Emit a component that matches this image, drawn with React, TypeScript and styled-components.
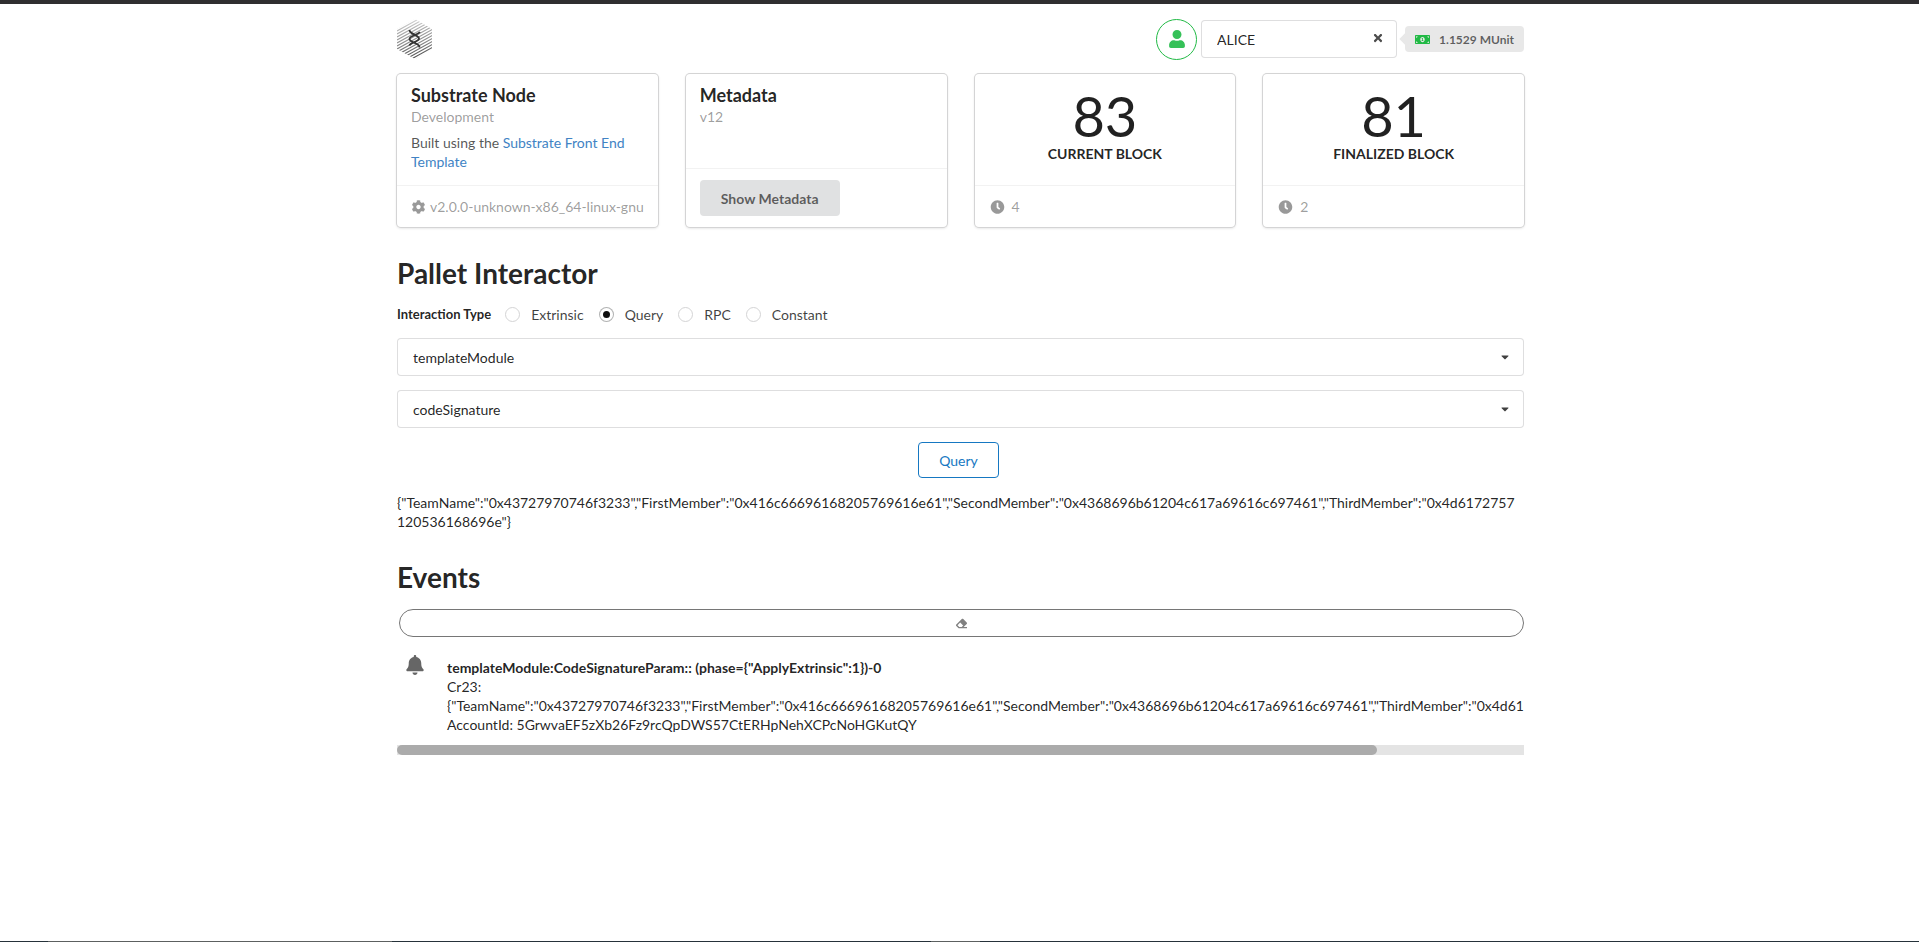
import React, { useRef, useState } from 'react';
import styled, { createGlobalStyle } from 'styled-components';
import { FaBell, FaCaretDown, FaClock, FaCog, FaEraser, FaMoneyBillAlt, FaTimes, FaUser } from 'react-icons/fa';

const GlobalStyle = createGlobalStyle`
  *, *::before, *::after { box-sizing: border-box; }
  body { margin: 0; background: #fff; }
  body, button, select, input {
    font-family: Lato, "Liberation Sans", sans-serif;
    font-size: 14px;
    line-height: 19px;
    color: rgba(0, 0, 0, 0.87);
  }
  h1, h2, p { margin: 0; }
`;

const Page = styled.div`
  min-height: 100vh;
  display: flex;
  flex-direction: column;
  border-top: 4px solid #2f2e30;
`;

const Container = styled.div`
  width: 100%;
  max-width: 1129px;
  margin: 0 auto;
  padding-left: 2px;
  flex: 1;
`;

const Header = styled.header`
  display: flex;
  align-items: center;
  justify-content: space-between;
  height: 70px;
`;

const LogoMark = styled.svg`
  display: block;
  width: 36px;
  height: 42px;
`;

const Account = styled.div`
  display: flex;
  align-items: center;
`;

const Avatar = styled.button`
  display: flex;
  align-items: center;
  justify-content: center;
  width: 41px;
  height: 41px;
  margin-right: 4px;
  padding: 0;
  border: 1px solid #21ba45;
  border-radius: 50%;
  background: #fff;
  color: #35c158;
  font-size: 18px;
`;

const SelectWrap = styled.div<{ $width?: string }>`
  position: relative;
  width: ${(p) => p.$width ?? '100%'};
`;

const Select = styled.select`
  appearance: none;
  display: block;
  width: 100%;
  height: 38px;
  padding: 0 32px 0 15px;
  border: 1px solid rgba(34, 36, 38, 0.15);
  border-radius: 4px;
  background: #fff;
`;

const Caret = styled(FaCaretDown)`
  position: absolute;
  right: 13px;
  top: 13px;
  font-size: 12px;
  color: rgba(0, 0, 0, 0.75);
  pointer-events: none;
`;

const Clear = styled.button`
  position: absolute;
  right: 13px;
  top: 12px;
  display: flex;
  padding: 0;
  border: 0;
  background: none;
  color: rgba(0, 0, 0, 0.7);
  font-size: 12px;
`;

const Balance = styled.div`
  position: relative;
  display: flex;
  align-items: center;
  gap: 9px;
  height: 26px;
  margin-left: 8px;
  padding: 0 10px;
  border-radius: 4px;
  background: #e8e8e8;
  color: rgba(0, 0, 0, 0.6);
  font-size: 12px;
  font-weight: 700;

  &::before {
    content: '';
    position: absolute;
    left: -4px;
    top: 9px;
    width: 8px;
    height: 8px;
    background: #e8e8e8;
    transform: rotate(45deg);
  }

  svg { color: #21ba45; font-size: 15px; }
`;

const Cards = styled.section`
  display: grid;
  grid-template-columns: repeat(4, minmax(0, 1fr));
  gap: 28px;
`;

const Card = styled.article`
  display: flex;
  flex-direction: column;
  min-height: 152px;
  border-radius: 4px;
  background: #fff;
  box-shadow: 0 1px 3px 0 #d4d4d5, 0 0 0 1px #d4d4d5;
`;

const CardBody = styled.div<{ $centered?: boolean }>`
  flex: 1;
  padding: ${(p) => (p.$centered ? '14px 14px 14px' : '9px 14px 14px')};
  text-align: ${(p) => (p.$centered ? 'center' : 'left')};
`;

const CardTitle = styled.h2`
  font-size: 18px;
  line-height: 24px;
  font-weight: 700;
`;

const Meta = styled.div`
  color: rgba(0, 0, 0, 0.4);
`;

const Description = styled.p`
  margin-top: 7px;
  color: rgba(0, 0, 0, 0.68);

  a { color: #4183c4; text-decoration: none; }
`;

const CardExtra = styled.div<{ $gap?: number }>`
  display: flex;
  align-items: center;
  gap: ${(p) => p.$gap ?? 4}px;
  padding: 11px 14px;
  border-top: 1px solid rgba(0, 0, 0, 0.05);
  color: rgba(0, 0, 0, 0.4);
  white-space: nowrap;

  > svg { width: 17px; }
`;

const GreyButton = styled.button`
  height: 36px;
  padding: 0 21px;
  border: 0;
  border-radius: 4px;
  background: #e0e1e2;
  color: rgba(0, 0, 0, 0.6);
  font-weight: 700;
`;

const StatValue = styled.div`
  font-size: 56px;
  line-height: 56px;
`;

const StatLabel = styled.div`
  font-weight: 700;
`;

const Heading = styled.h1`
  margin-top: 28px;
  font-size: 28px;
  line-height: 36px;
  font-weight: 700;
`;

const Form = styled.form`
  display: flex;
  flex-direction: column;
  gap: 14px;
  margin-top: 14px;
`;

const RadioRow = styled.fieldset`
  display: flex;
  align-items: center;
  height: 19px;
  margin: 0;
  padding: 0;
  border: 0;
`;

const RowLabel = styled.span`
  margin-right: 14px;
  font-size: 13px;
  font-weight: 700;
`;

const RadioLabel = styled.label`
  display: flex;
  align-items: center;
  gap: 11px;
  margin-right: 15px;
  color: rgba(0, 0, 0, 0.75);
`;

const Radio = styled.input`
  appearance: none;
  display: grid;
  place-items: center;
  width: 15px;
  height: 15px;
  margin: 0;
  border: 1px solid #d4d4d5;
  border-radius: 50%;
  background: #fff;

  &:checked { border-color: rgba(34, 36, 38, 0.35); }
  &:checked::before {
    content: '';
    width: 7px;
    height: 7px;
    border-radius: 50%;
    background: rgba(0, 0, 0, 0.95);
  }
`;

const QueryButton = styled.button`
  align-self: center;
  height: 36px;
  margin-right: 4px;
  padding: 0 20px;
  border: 1px solid #1678c2;
  border-radius: 4px;
  background: #fff;
  color: #1678c2;
`;

const Output = styled.p`
  margin-top: 15px;
  padding-right: 8px;
  word-break: break-all;
`;

const EraseButton = styled.button`
  display: flex;
  align-items: center;
  justify-content: center;
  width: calc(100% - 2px);
  height: 28px;
  margin: 14px 0 0 2px;
  padding: 0;
  border: 1px solid #767676;
  border-radius: 14px;
  background: #fff;
  color: #808080;
  font-size: 11px;
`;

const Feed = styled.div`
  margin-top: 16px;
  overflow-x: auto;
  scrollbar-width: none;
`;

const FeedEvent = styled.div`
  display: flex;
  width: max-content;
  padding: 0 28px 11px 8px;
  gap: 22px;

  > svg { margin-top: 2px; font-size: 20px; color: rgba(0, 0, 0, 0.6); }
`;

const FeedContent = styled.div`
  padding-top: 5px;
  white-space: pre;
`;

const FeedSummary = styled.div`
  font-weight: 700;
`;

const ScrollTrack = styled.div`
  height: 10px;
  background: #e4e4e4;
`;

const ScrollThumb = styled.div`
  width: 87%;
  height: 10px;
  border-radius: 5px;
  background: #ababab;
`;

const Taskbar = styled.footer`
  display: flex;
  height: 1px;
  background: #26323a;
`;

const TaskbarItem = styled.span<{ $active?: boolean; $share: number }>`
  flex: ${(p) => p.$share} 0 0;
  background: ${(p) => (p.$active ? '#5c6060' : '#26323a')};
`;

const Logo = () => (
  <LogoMark viewBox="0 0 36 42" role="img" aria-label="Substrate">
    <defs>
      <clipPath id="hex"><path d="M18 1 35 11V31L18 41 0 31V11Z" /></clipPath>
      <linearGradient id="tone" gradientUnits="userSpaceOnUse" x1="14" y1="0" x2="22" y2="42">
        <stop offset="0" stopColor="#ddd" />
        <stop offset="0.3" stopColor="#aaa" />
        <stop offset="0.6" stopColor="#888" />
        <stop offset="1" stopColor="#444" />
      </linearGradient>
    </defs>
    <g clipPath="url(#hex)">
      <path
        d={Array.from({ length: 19 }, (_, i) => `M0 ${4 + i * 3}L36 ${-16 + i * 3}`).join('')}
        stroke="url(#tone)"
        strokeWidth="1.1"
      />
    </g>
    <path
      d="M12.500 12C12 16 22 17 22 20.500S13 24 12.500 27.500M23 14C21 17 12.500 17.500 12.500 21S23 25 22.500 29.500"
      fill="none"
      stroke="#333"
      strokeWidth="1.800"
    />
  </LogoMark>
);

const Dropdown = ({ label, value }: { label: string; value: string }) => (
  <SelectWrap>
    <Select aria-label={label} defaultValue={value}>
      <option>{value}</option>
    </Select>
    <Caret />
  </SelectWrap>
);

const Stat = ({ value, label, seconds }: { value: number; label: string; seconds: number }) => (
  <Card>
    <CardBody $centered>
      <StatValue>{value}</StatValue>
      <StatLabel>{label}</StatLabel>
    </CardBody>
    <CardExtra $gap={6}><FaClock />{seconds}</CardExtra>
  </Card>
);

const signature =
  '{"TeamName":"0x43727970746f3233","FirstMember":"0x416c66696168205769616e61","SecondMember":"0x4368696b61204c617a69616c697461","ThirdMember":"0x4d6172757120536168696e"}';

const interactionTypes = ['Extrinsic', 'Query', 'RPC', 'Constant'];

export default function App() {
  const [type, setType] = useState('Query');
  const [scroll, setScroll] = useState(0);
  const feed = useRef<HTMLDivElement>(null);

  const handleScroll = () => {
    const el = feed.current;
    if (el && el.scrollWidth > el.clientWidth) {
      setScroll(el.scrollLeft / (el.scrollWidth - el.clientWidth));
    }
  };

  return (
    <Page>
      <GlobalStyle />
      <Container>
        <Header>
          <Logo />
          <Account>
            <Avatar type="button" aria-label="Account"><FaUser /></Avatar>
            <SelectWrap $width="196px">
              <Select aria-label="Selected account" defaultValue="ALICE">
                <option>ALICE</option>
              </Select>
              <Clear type="button" aria-label="Clear account"><FaTimes /></Clear>
            </SelectWrap>
            <Balance><FaMoneyBillAlt />1.1529 MUnit</Balance>
          </Account>
        </Header>

        <Cards>
          <Card>
            <CardBody>
              <CardTitle>Substrate Node</CardTitle>
              <Meta>Development</Meta>
              <Description>
                Built using the <a href="#template">Substrate Front End Template</a>
              </Description>
            </CardBody>
            <CardExtra><FaCog />v2.0.0-unknown-x86_64-linux-gnu</CardExtra>
          </Card>
          <Card>
            <CardBody>
              <CardTitle>Metadata</CardTitle>
              <Meta>v12</Meta>
            </CardBody>
            <CardExtra><GreyButton type="button">Show Metadata</GreyButton></CardExtra>
          </Card>
          <Stat value={83} label="CURRENT BLOCK" seconds={4} />
          <Stat value={81} label="FINALIZED BLOCK" seconds={2} />
        </Cards>

        <Heading>Pallet Interactor</Heading>
        <Form onSubmit={(e) => e.preventDefault()}>
          <RadioRow aria-label="Interaction Type">
            <RowLabel>Interaction Type</RowLabel>
            {interactionTypes.map((name) => (
              <RadioLabel key={name}>
                <Radio type="radio" name="interaction" checked={type === name} onChange={() => setType(name)} />
                {name}
              </RadioLabel>
            ))}
          </RadioRow>
          <Dropdown label="Pallet" value="templateModule" />
          <Dropdown label="Storage item" value="codeSignature" />
          <QueryButton type="submit">Query</QueryButton>
        </Form>
        <Output>{signature}</Output>

        <Heading>Events</Heading>
        <EraseButton type="button" aria-label="Clear events"><FaEraser /></EraseButton>
        <Feed ref={feed} onScroll={handleScroll}>
          <FeedEvent>
            <FaBell />
            <FeedContent>
              <FeedSummary>{'templateModule:CodeSignatureParam:: (phase={"ApplyExtrinsic":1})-0'}</FeedSummary>
              <div>Cr23:</div>
              <div>{signature}</div>
              <div>AccountId: 5GrwvaEF5zXb26Fz9rcQpDWS57CtERHpNehXCPcNoHGKutQY</div>
            </FeedContent>
          </FeedEvent>
        </Feed>
        <ScrollTrack>
          <ScrollThumb style={{ marginLeft: `${scroll * 13}%` }} />
        </ScrollTrack>
      </Container>
      <Taskbar aria-hidden>
        <TaskbarItem $share={48} />
        <TaskbarItem $share={344} $active />
        <TaskbarItem $share={539} />
        <TaskbarItem $share={49} $active />
        <TaskbarItem $share={939} />
      </Taskbar>
    </Page>
  );
}
